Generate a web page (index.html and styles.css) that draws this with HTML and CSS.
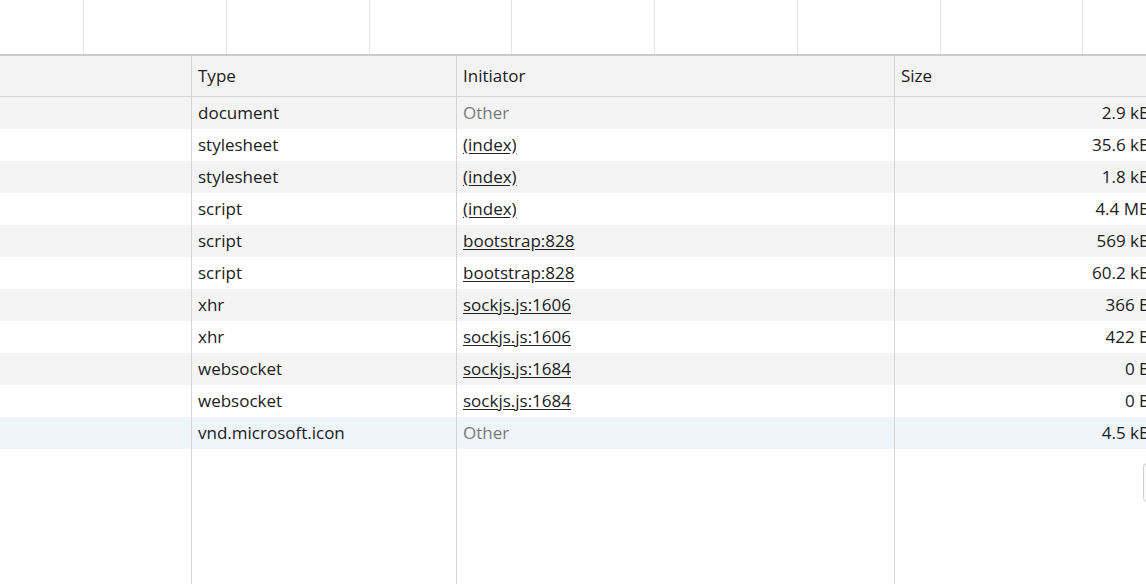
FILE: index.html
```html
<!DOCTYPE html>
<html>
<head>
<meta charset="utf-8">
<link rel="stylesheet" href="styles.css">
</head>
<body>
<div class="page">
  <div class="overview">
    <div class="tick"></div><div class="tick"></div><div class="tick"></div><div class="tick"></div>
    <div class="tick"></div><div class="tick"></div><div class="tick"></div><div class="tick"></div><div class="tick"></div>
  </div>
  <div class="grid">
    <div class="row head"><div class="c c1"></div><div class="c c2">Type</div><div class="c c3">Initiator</div><div class="c c4 left">Size</div></div>
    <div class="row alt"><div class="c c1"></div><div class="c c2">document</div><div class="c c3 dim">Other</div><div class="c c4">2.9 kB</div></div>
    <div class="row"><div class="c c1"></div><div class="c c2">stylesheet</div><div class="c c3"><span class="link">(index)</span></div><div class="c c4">35.6 kB</div></div>
    <div class="row alt"><div class="c c1"></div><div class="c c2">stylesheet</div><div class="c c3"><span class="link">(index)</span></div><div class="c c4">1.8 kB</div></div>
    <div class="row"><div class="c c1"></div><div class="c c2">script</div><div class="c c3"><span class="link">(index)</span></div><div class="c c4">4.4 MB</div></div>
    <div class="row alt"><div class="c c1"></div><div class="c c2">script</div><div class="c c3"><span class="link">bootstrap:828</span></div><div class="c c4">569 kB</div></div>
    <div class="row"><div class="c c1"></div><div class="c c2">script</div><div class="c c3"><span class="link">bootstrap:828</span></div><div class="c c4">60.2 kB</div></div>
    <div class="row alt"><div class="c c1"></div><div class="c c2">xhr</div><div class="c c3"><span class="link">sockjs.js:1606</span></div><div class="c c4">366 B</div></div>
    <div class="row"><div class="c c1"></div><div class="c c2">xhr</div><div class="c c3"><span class="link">sockjs.js:1606</span></div><div class="c c4">422 B</div></div>
    <div class="row alt"><div class="c c1"></div><div class="c c2">websocket</div><div class="c c3"><span class="link">sockjs.js:1684</span></div><div class="c c4">0 B</div></div>
    <div class="row"><div class="c c1"></div><div class="c c2">websocket</div><div class="c c3"><span class="link">sockjs.js:1684</span></div><div class="c c4">0 B</div></div>
    <div class="row sel"><div class="c c1"></div><div class="c c2">vnd.microsoft.icon</div><div class="c c3 dim">Other</div><div class="c c4">4.5 kB</div></div>
    <div class="row filler"><div class="c c1"></div><div class="c c2"></div><div class="c c3"></div><div class="c c4"></div></div>
  </div>
  <div class="edge"></div>
</div>
</body>
</html>
```
FILE: styles.css
```css
html, body {
  margin: 0;
  padding: 0;
  background: #ffffff;
  overflow: hidden;
}
.page {
  position: relative;
  width: 1146px;
  height: 584px;
  overflow: hidden;
  font-family: "Open Sans", "Noto Sans", sans-serif;
  font-size: 17px;
  color: #202020;
  display: flex;
  flex-direction: column;
}
.overview {
  height: 54px;
  flex: none;
  border-bottom: 2px solid #cbcbcb;
  display: grid;
  grid-template-columns: 84px repeat(8, 142.75px);
  width: 1260px;
}
.tick {
  border-right: 1px solid #e3e3e3;
}
.grid {
  flex: 1;
  display: flex;
  flex-direction: column;
  width: 1160px;
}
.row {
  display: grid;
  grid-template-columns: 192px 265px 438px 265px;
  height: 32px;
  background: #ffffff;
}
.row.alt { background: #f4f4f4; }
.row.sel { background: #eff4fb; }
.row.head {
  height: 40px;
  background: #f3f3f3;
  border-bottom: 1px solid #d6d6d6;
}
.row.filler { flex: 1; height: auto; }
.c {
  border-right: 1px solid #d6d6d6;
  padding: 0 6px 2px;
  display: flex;
  align-items: center;
  white-space: nowrap;
  overflow: hidden;
}
.c4 {
  justify-content: flex-end;
  padding-right: 10px;
  border-right: none;
}
.c4.left { justify-content: flex-start; }
.dim { color: #7a7a7a; }
.link { text-decoration: underline; text-underline-offset: 2px; }
.edge {
  position: absolute;
  left: 1143px;
  top: 463px;
  width: 12px;
  height: 37px;
  border: 1px solid #cfcfcf;
  border-radius: 4px;
  background: #fafafa;
}
```
